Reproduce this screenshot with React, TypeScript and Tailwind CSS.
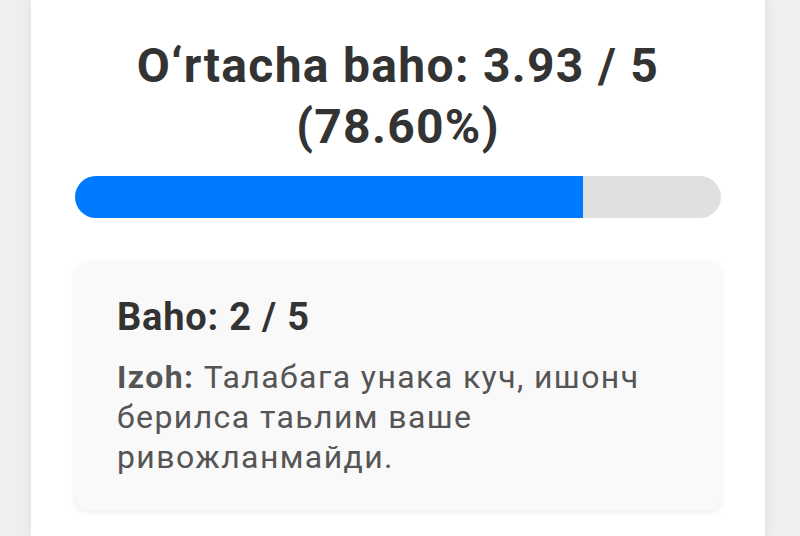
import React from 'react';

const average = 3.93;
const percent = 78.6;

const App: React.FC = () => {
  return (
    <div className="w-[800px] h-[536px] overflow-hidden bg-[#efefef] flex font-['Roboto',sans-serif]">
      <div className="ml-[31px] w-[734px] h-full bg-white shadow-[0_0_12px_rgba(0,0,0,0.08)] px-[44px] pt-[35px]">
        <h2 className="text-center text-[#333] font-bold text-[48px] leading-[61px] tracking-[1.3px]">
          O‘rtacha baho: {average.toFixed(2)} / 5
          <br />({percent.toFixed(2)}%)
        </h2>

        <div className="mt-[19px] h-[42px] rounded-full bg-[#e0e0e0] overflow-hidden">
          <div className="h-full bg-[#007bff]" style={{ width: `${percent}%` }} />
        </div>

        <div className="mt-[44px] bg-[#f9f9f9] rounded-xl shadow-[0_2px_6px_rgba(0,0,0,0.08)] px-[42px] pt-[33px] pb-[33px]">
          <div className="text-[#333] font-bold text-[38px] leading-[44px] tracking-[0.8px]">Baho: 2 / 5</div>
          <p className="mt-[18px] text-[#555] text-[32px] leading-[40px] tracking-[1.4px]">
            <span className="font-bold">Izoh:</span> Талабага унака куч, ишонч берилса таьлим ваше ривожланмайди.
          </p>
        </div>
      </div>
    </div>
  );
};

export default App;
